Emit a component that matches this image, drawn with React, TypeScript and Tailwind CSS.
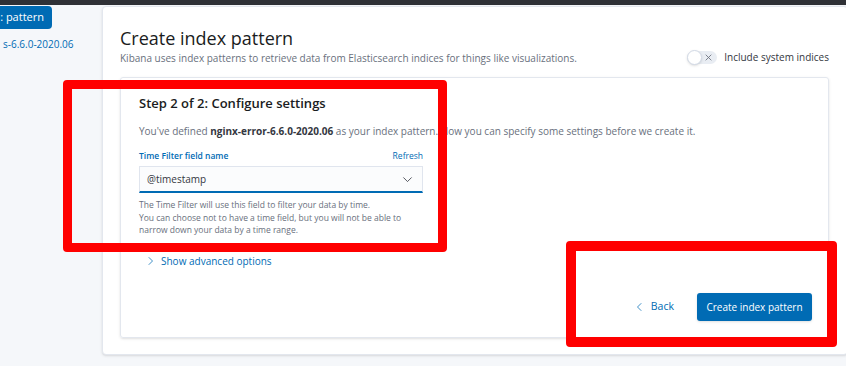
import React from "react";

const Chevron = ({ dir, className }: { dir: "down" | "right" | "left"; className?: string }) => {
  const d =
    dir === "down" ? "M2 5l6 6 6-6" : dir === "right" ? "M6 2l6 6-6 6" : "M10 2L4 8l6 6";
  return (
    <svg viewBox="0 0 16 16" className={className} fill="none" stroke="currentColor" strokeWidth="1.2">
      <path d={d} />
    </svg>
  );
};

const Toggle = () => (
  <div className="relative flex h-[13px] w-[30px] items-center rounded-full bg-[#e9edf3]">
    <div className="absolute left-0 top-[-1px] h-[15px] w-[15px] rounded-full border border-[#d3dae6] bg-white shadow-sm" />
    <svg viewBox="0 0 16 16" className="absolute left-[17px] h-[9px] w-[9px] text-[#69707d]" stroke="currentColor" strokeWidth="1.5">
      <path d="M3 3l10 10M13 3L3 13" />
    </svg>
  </div>
);

const App = () => {
  return (
    <div className="relative h-[366px] w-[846px] overflow-hidden bg-[#f5f7fa] font-['Open_Sans',sans-serif]">
      <div className="h-[5px] bg-[#2f3136]" />
      <div className="flex">
        <div className="w-[102px] shrink-0">
          <div className="mt-[1px] flex h-[23px] w-[52px] items-center justify-end rounded-r-[4px] bg-[#006bb4] pr-[8px]">
            <span className="whitespace-nowrap text-[11px] text-white">: pattern</span>
          </div>
          <div className="mt-[6px] pl-[3px] leading-[14px]">
            <span className="whitespace-nowrap text-[10px] text-[#006bb4]">s-6.6.0-2020.06</span>
          </div>
        </div>
        <div className="mt-[1px] h-[349px] w-[746px] shrink-0 rounded-[4px] border border-[#e3e7ee] bg-white pl-[17px] pr-[18px] pt-[20px] shadow-sm">
          <div className="flex items-end justify-between">
            <div>
              <h1 className="text-[18px] font-normal leading-[23px] text-[#1a1c21]">Create index pattern</h1>
              <p className="mt-[1px] text-[10px] leading-[14px] text-[#69707d]">
                Kibana uses index patterns to retrieve data from Elasticsearch indices for things like visualizations.
              </p>
            </div>
            <div className="flex items-center gap-[7px] pb-[1px]">
              <Toggle />
              <span className="text-[10px] leading-[14px] text-[#343741]">Include system indices</span>
            </div>
          </div>

          <div className="mt-[12px] flex h-[261px] flex-col rounded-[3px] border border-[#e3e7ee] pb-[16px] pl-[18px] pr-[16px] pt-[15px] shadow-sm">
            <h2 className="text-[13px] font-semibold leading-[20px] text-[#1a1c21]">Step 2 of 2: Configure settings</h2>
            <p className="mt-[11px] text-[10px] leading-[14px] text-[#69707d]">
              You've defined <b className="font-bold text-[#343741]">nginx-error-6.6.0-2020.06</b> as your index pattern. Now you can specify some settings before we create it.
            </p>
            <div className="mt-[12px] w-[284px]">
              <div className="flex items-center justify-between text-[8.5px] leading-[12px]">
                <span className="font-semibold text-[#006bb4]">Time Filter field name</span>
                <span className="text-[#006bb4]">Refresh</span>
              </div>
              <div className="mt-[4px] flex h-[27px] items-center justify-between border border-b-2 border-[#e0e5ee] border-b-[#006bb4] bg-[#fbfcfd] pl-[7px] pr-[9px]">
                <span className="text-[10px] text-[#343741]">@timestamp</span>
                <Chevron dir="down" className="h-[11px] w-[11px] text-[#343741]" />
              </div>
              <div className="mt-[6px] text-[8.5px] leading-[12.5px] text-[#69707d]">
                <div className="whitespace-nowrap">The Time Filter will use this field to filter your data by time.</div>
                <div className="whitespace-nowrap">You can choose not to have a time field, but you will not be able to</div>
                <div className="whitespace-nowrap">narrow down your data by a time range.</div>
              </div>
            </div>
            <div className="mt-[17px] flex items-center gap-[6px] pl-[6px] text-[10px] leading-[14px] text-[#006bb4]">
              <Chevron dir="right" className="h-[10px] w-[10px]" />
              <span>Show advanced options</span>
            </div>
            <div className="mt-auto flex items-center justify-end gap-[23px]">
              <div className="flex items-center gap-[6px] text-[10.5px] text-[#006bb4]">
                <Chevron dir="left" className="h-[10px] w-[10px]" />
                <span>Back</span>
              </div>
              <button className="flex h-[28px] w-[115px] items-center justify-center rounded-[3px] bg-[#006bb4] text-[10px] text-white shadow">
                Create index pattern
              </button>
            </div>
          </div>
        </div>
      </div>

      <div className="absolute left-[63px] top-[80px] h-[172px] w-[384px] rounded-[4px] border-[9px] border-[#ff0000]" />
      <div className="absolute left-[566px] top-[241px] h-[106px] w-[271px] rounded-[4px] border-[10px] border-[#ff0000]" />
    </div>
  );
};

export default App;
